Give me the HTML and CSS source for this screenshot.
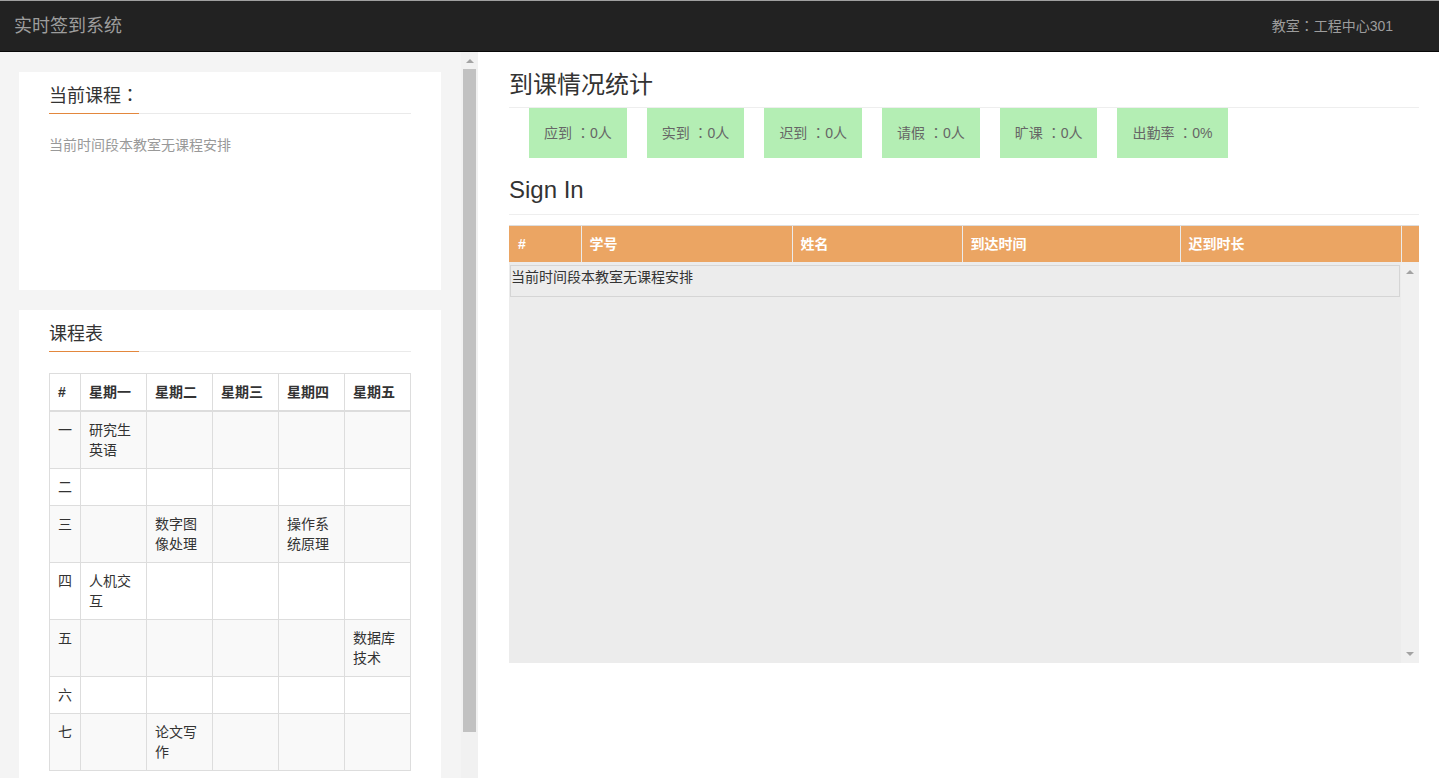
FILE: index.html
```html
<!DOCTYPE html>
<html lang="zh-CN">
<head>
<meta charset="utf-8">
<title>实时签到系统</title>
<link rel="stylesheet" href="styles.css">
</head>
<body>
<header class="navbar">
  <div class="brand">实时签到系统</div>
  <div class="room">教室<span class="colon" lang="ja">：</span>工程中心301</div>
</header>
<main class="main">
  <aside class="side">
    <div class="side-content">
      <section class="card card-current">
        <h3 class="card-title">当前课程<span class="colon" lang="ja">：</span></h3>
        <p class="muted">当前时间段本教室无课程安排</p>
      </section>
      <section class="card">
        <h3 class="card-title">课程表</h3>
        <table class="schedule">
          <colgroup>
            <col class="c-idx"><col class="c-day"><col class="c-day"><col class="c-day"><col class="c-day"><col class="c-day">
          </colgroup>
          <thead>
            <tr><th>#</th><th>星期一</th><th>星期二</th><th>星期三</th><th>星期四</th><th>星期五</th></tr>
          </thead>
          <tbody>
            <tr><td>一</td><td>研究生英语</td><td></td><td></td><td></td><td></td></tr>
            <tr><td>二</td><td></td><td></td><td></td><td></td><td></td></tr>
            <tr><td>三</td><td></td><td>数字图像处理</td><td></td><td>操作系统原理</td><td></td></tr>
            <tr><td>四</td><td>人机交互</td><td></td><td></td><td></td><td></td></tr>
            <tr><td>五</td><td></td><td></td><td></td><td></td><td>数据库技术</td></tr>
            <tr><td>六</td><td></td><td></td><td></td><td></td><td></td></tr>
            <tr><td>七</td><td></td><td>论文写作</td><td></td><td></td><td></td></tr>
          </tbody>
        </table>
      </section>
    </div>
    <div class="vscroll">
      <span class="arrow-up"></span>
      <span class="thumb"></span>
    </div>
  </aside>
  <section class="content">
    <h2 class="page-title">到课情况统计</h2>
    <div class="stats">
      <div class="stat">应到 <span class="colon" lang="ja">：</span>0人</div>
      <div class="stat">实到 <span class="colon" lang="ja">：</span>0人</div>
      <div class="stat">迟到 <span class="colon" lang="ja">：</span>0人</div>
      <div class="stat">请假 <span class="colon" lang="ja">：</span>0人</div>
      <div class="stat">旷课 <span class="colon" lang="ja">：</span>0人</div>
      <div class="stat">出勤率 <span class="colon" lang="ja">：</span>0%</div>
    </div>
    <h2 class="page-title signin-title">Sign In</h2>
    <div class="signin">
      <div class="signin-head">
        <table class="head-table">
          <colgroup>
            <col class="h1"><col class="h2"><col class="h3"><col class="h4"><col class="h5">
          </colgroup>
          <thead>
            <tr><th>#</th><th>学号</th><th>姓名</th><th>到达时间</th><th>迟到时长</th></tr>
          </thead>
        </table>
        <div class="gutter-head"></div>
      </div>
      <div class="signin-body">
        <div class="rows">
          <div class="empty-row">当前时间段本教室无课程安排</div>
        </div>
        <div class="gutter">
          <span class="arrow-up"></span>
          <span class="arrow-down"></span>
        </div>
      </div>
    </div>
  </section>
</main>
</body>
</html>
```

FILE: styles.css
```css
* {
  box-sizing: border-box;
}

html, body {
  margin: 0;
  padding: 0;
}

body {
  height: 778px;
  overflow: hidden;
  font-family: "Liberation Sans", "Noto Sans CJK SC", sans-serif;
  font-size: 14px;
  line-height: 20px;
  color: #333;
  background: #fff;
}

.colon {
  font-family: "Noto Sans CJK JP", "Noto Sans CJK TC", sans-serif;
  line-height: 0;
  text-spacing-trim: space-all;
}

/* ---------- navbar ---------- */
.navbar {
  height: 52px;
  background: #222;
  border-top: 1px solid #a0a0a0;
  border-bottom: 1px solid #080808;
  display: flex;
  align-items: center;
  justify-content: space-between;
  padding: 0 46px 0 14px;
  color: #9d9d9d;
}

.brand {
  font-size: 18px;
  line-height: 20px;
}

.room {
  font-size: 14px;
  line-height: 20px;
}

/* ---------- layout ---------- */
.main {
  display: flex;
  height: 726px;
}

.side {
  width: 478px;
  flex: none;
  display: flex;
  background: #f4f4f4;
}

.side-content {
  flex: 1;
  min-width: 0;
  padding: 20px 20px 0 19px;
  overflow: hidden;
}

.vscroll {
  width: 17px;
  flex: none;
  background: #f1f1f1;
  display: flex;
  flex-direction: column;
  align-items: center;
}

.vscroll .arrow-up {
  margin-top: 7px;
}

.thumb {
  display: block;
  width: 13px;
  height: 663px;
  margin-top: 6px;
  background: #c1c1c1;
}

.arrow-up,
.arrow-down {
  display: block;
  width: 0;
  height: 0;
  border-left: 4px solid transparent;
  border-right: 4px solid transparent;
}

.arrow-up {
  border-bottom: 4px solid #a3a3a3;
}

.arrow-down {
  border-top: 4px solid #a3a3a3;
}

/* ---------- cards ---------- */
.card {
  background: #fff;
  padding: 11px 30px 20px;
  margin-bottom: 20px;
}

.card-current {
  height: 218px;
}

.card-title {
  margin: 0;
  font-size: 18px;
  font-weight: 400;
  line-height: 26px;
  padding-bottom: 5px;
  color: #333;
  background: linear-gradient(to right, #e3873d 0, #e3873d 90px, #eaeaea 90px) left bottom / 100% 1px no-repeat;
}

.muted {
  margin: 21px 0 0;
  color: #999;
}

/* ---------- schedule table ---------- */
.schedule {
  margin-top: 21px;
  width: 362px;
  border-collapse: collapse;
  table-layout: fixed;
  border: 1px solid #ddd;
}

.c-idx {
  width: 31px;
}

.c-day {
  width: 66px;
}

.schedule th,
.schedule td {
  border: 1px solid #ddd;
  padding: 8px;
  line-height: 20px;
  text-align: left;
  vertical-align: top;
  color: #333;
}

.schedule thead th {
  font-weight: 700;
  border-bottom-width: 2px;
  vertical-align: bottom;
}

.schedule tbody tr:nth-child(odd) {
  background: #f9f9f9;
}

/* ---------- right content ---------- */
.content {
  flex: 1;
  min-width: 0;
  padding: 20px 20px 0 31px;
  background: #fff;
}

.page-title {
  margin: 0;
  font-size: 24px;
  font-weight: 400;
  line-height: 26px;
  padding-bottom: 9px;
  border-bottom: 1px solid #eee;
  color: #333;
}

.stats {
  display: flex;
  gap: 20px;
  padding-left: 20px;
}

.stat {
  height: 50px;
  line-height: 50px;
  padding: 0 15px;
  background: #b4eeb4;
  color: #666;
  white-space: nowrap;
}

.signin-title {
  margin-top: 19px;
  padding-bottom: 11px;
}

.signin {
  margin-top: 10px;
  border-top: 1px solid #ddd;
}

.signin-head {
  display: flex;
  background: #eba563;
  height: 36px;
}

.head-table {
  width: 892px;
  flex: none;
  border-collapse: collapse;
  table-layout: fixed;
}

.h1 { width: 72px; }
.h2 { width: 211px; }
.h3 { width: 170px; }
.h4 { width: 218px; }
.h5 { width: 221px; }

.head-table th {
  padding: 8px;
  line-height: 20px;
  height: 36px;
  color: #fff;
  font-weight: 700;
  text-align: left;
  border-left: 1px solid #ebebeb;
}

.head-table th:first-child {
  border-left: none;
  padding-left: 9px;
}

.gutter-head {
  flex: 1;
  border-left: 1px solid #ebebeb;
  margin-bottom: -1px;
  background: #eba563;
}

.signin-body {
  display: flex;
  height: 401px;
}

.rows {
  flex: 1;
  min-width: 0;
  background: #ececec;
  padding: 3px 1px 0;
}

.empty-row {
  border: 1px solid #d5d5d5;
  padding: 1px 0 9px 0;
  line-height: 20px;
  color: #333;
}

.gutter {
  width: 18px;
  flex: none;
  background: #f0f0f0;
  display: flex;
  flex-direction: column;
  align-items: center;
  justify-content: space-between;
  padding: 8px 0 7px;
}
```
